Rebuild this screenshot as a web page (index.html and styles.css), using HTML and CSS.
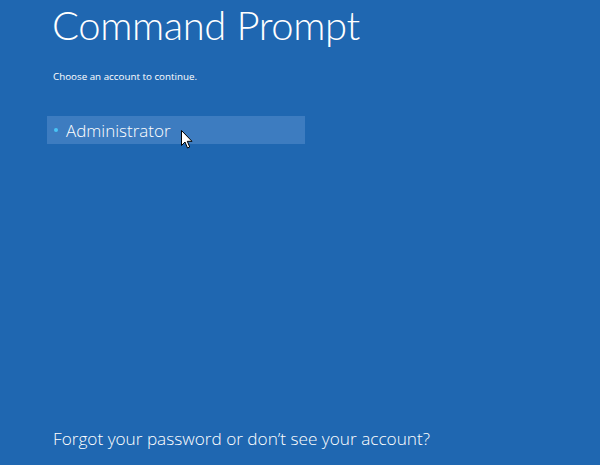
FILE: index.html
```html
<!DOCTYPE html>
<html lang="en">
<head>
  <meta charset="UTF-8">
  <title>Command Prompt</title>
  <link rel="stylesheet" href="styles.css">
</head>
<body>
  <div class="screen">
    <div class="title">Command Prompt</div>
    <div class="subtitle">Choose an account to continue.</div>

    <div class="accounts">
      <div class="account">
        <span class="dot"></span>
        <span class="name">Administrator</span>
        <svg class="cursor" width="12" height="19" viewBox="0 0 12 19">
          <path d="M0.5 0.5 L0.5 15.5 L4 12 L6.5 18 L8.7 17 L6.3 11.3 L11 11.3 Z" fill="#fff" stroke="#000" stroke-width="1"/>
        </svg>
      </div>
    </div>

    <div class="footer">Forgot your password or don&rsquo;t see your account?</div>
  </div>
</body>
</html>
```

FILE: styles.css
```css
body {
  margin: 0;
  background-color: #1f67b1;
  color: #ffffff;
  font-family: 'Open Sans', sans-serif;
}

.screen {
  height: 465px;
  display: flex;
  flex-direction: column;
  padding-left: 52px;
  box-sizing: border-box;
}

.title {
  font-family: 'Lato', sans-serif;
  font-size: 40px;
  font-weight: 300;
  letter-spacing: -0.4px;
  line-height: 50px;
  margin-top: 0;
}

.subtitle {
  font-size: 9.8px;
  margin-top: 20px;
  margin-left: 1px;
}

.accounts {
  margin-top: 33px;
  margin-left: -5px;
}

.account {
  position: relative;
  width: 258px;
  height: 28px;
  background-color: #3d7cc0;
  display: flex;
  align-items: center;
}

.dot {
  width: 4px;
  height: 4px;
  border-radius: 50%;
  background-color: #48c4f6;
  margin-left: 7px;
  margin-right: 8px;
}

.name {
  font-size: 17px;
  font-weight: 300;
}

.cursor {
  position: absolute;
  left: 134px;
  top: 14px;
}

.footer {
  margin-top: auto;
  margin-bottom: 15px;
  margin-left: 1px;
  font-size: 17.2px;
  font-weight: 300;
}
```
